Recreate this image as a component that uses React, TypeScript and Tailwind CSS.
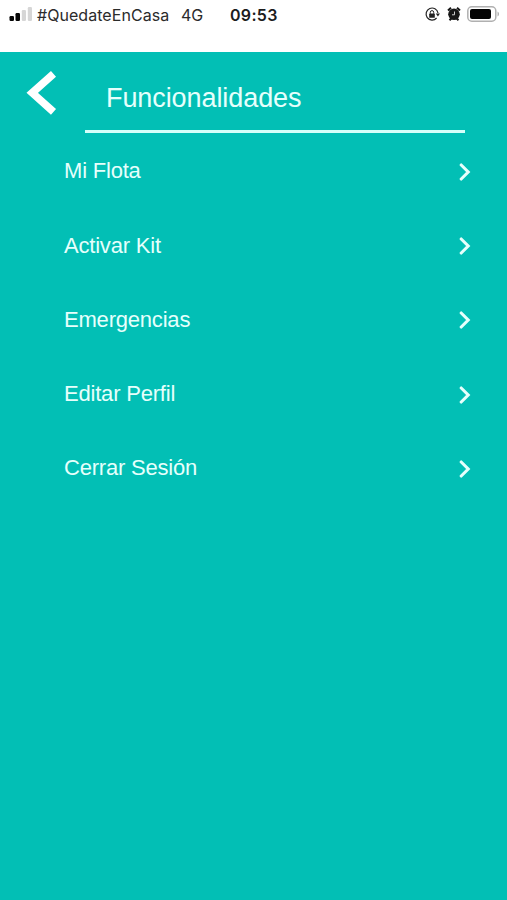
const menuItems = [
  "Mi Flota",
  "Activar Kit",
  "Emergencias",
  "Editar Perfil",
  "Cerrar Sesión",
];

function StatusBar() {
  return (
    <div className="flex h-[52px] items-start bg-white font-[Inter,sans-serif] text-[#2b2b2b]">
      <svg className="mt-1.5 ml-[9px] h-4 w-6 shrink-0" viewBox="0 0 24 16">
        <rect x="0.5" y="10" width="4.5" height="5" rx="1.2" fill="#050505" />
        <rect x="6.5" y="7" width="4.5" height="8" rx="1.2" fill="#050505" />
        <rect x="12.8" y="4" width="4.2" height="11" rx="1.2" fill="#d6d6d6" />
        <rect x="18.8" y="1" width="4.2" height="14" rx="1.2" fill="#d6d6d6" />
      </svg>
      <span className="mt-1 ml-1 w-36 text-base leading-[22px] tracking-[0.05px] whitespace-nowrap">
        #QuedateEnCasa
      </span>
      <span className="mt-1 w-[49px] text-base leading-[22px]">4G</span>
      <span className="mt-1 text-base leading-[22px] font-semibold tracking-[0.3px] text-[#1c1c1c]">
        09:53
      </span>
      <div className="mt-1.5 mr-[7px] ml-auto flex items-center">
        <svg className="h-4 w-4" viewBox="0 0 16 16" fill="none">
          <path
            d="M14 7A6 6 0 1 0 12.6 12"
            stroke="#222"
            strokeWidth="1.2"
          />
          <path d="M11.8 7.4h4.2l-2.1 3.2z" fill="#222" />
          <rect x="5.2" y="7.6" width="5.6" height="4.2" rx="0.6" fill="#222" />
          <path d="M6.3 7.8V6.3a1.7 1.7 0 0 1 3.4 0v1.5" stroke="#222" />
        </svg>
        <svg className="ml-[7px] h-4 w-3.5" viewBox="0 0 14 16" fill="none">
          <circle cx="7" cy="8.3" r="5.8" fill="#161616" />
          <path
            d="M1 4.5 4 1.8M13 4.5l-3-2.7M2.5 14.3l1.8-1.8M11.5 14.3l-1.8-1.8"
            stroke="#161616"
            strokeWidth="2"
          />
          <path d="M7.5 5.5v3.3H5" stroke="#ccc" />
        </svg>
        <svg className="ml-1.5 h-4 w-[33px]" viewBox="0 0 33 16">
          <rect
            x="0.8"
            y="0.8"
            width="28"
            height="14.4"
            rx="4"
            fill="#fff"
            stroke="#b0b0b0"
            strokeWidth="1.5"
          />
          <rect x="3" y="3" width="21" height="10" rx="2" fill="#050505" />
          <path d="M30.5 5.5c2 .8 2 4.2 0 5z" fill="#b0b0b0" />
        </svg>
      </div>
    </div>
  );
}

export default function App() {
  return (
    <main className="flex h-screen flex-col overflow-hidden bg-[#02bfb5] font-['Liberation_Sans',Arial,sans-serif]">
      <StatusBar />

      <header className="flex h-[83px] shrink-0 items-start text-[#e6fffc]">
        <button aria-label="Volver" className="mt-[18px] ml-[26px] shrink-0">
          <svg className="h-[46px] w-8" viewBox="0 0 32 46" fill="none">
            <path d="M27.5 3.8 6.2 22.8l21.3 19" stroke="#fff" strokeWidth="7.6" />
          </svg>
        </button>
        <h1 className="ml-[27px] h-[81px] w-[380px] border-b-[3px] border-[#d5fffa] pt-[30px] pl-[21px] text-[27px] leading-8 tracking-[-0.08px]">
          Funcionalidades
        </h1>
      </header>

      <nav className="flex flex-col pr-9 pl-16">
        {menuItems.map((item) => (
          <a
            key={item}
            href="#"
            className="flex h-[74.2px] items-center justify-between text-[22px] leading-none tracking-[-0.2px] text-[#e6fffc]"
          >
            <span className="pb-[1.5px]">{item}</span>
            <svg className="h-[18px] w-3" viewBox="0 0 12 18" fill="none">
              <path
                d="m2.2 2 7 7-7 7"
                stroke="#e6fffc"
                strokeWidth="3.1"
                strokeLinecap="round"
              />
            </svg>
          </a>
        ))}
      </nav>
    </main>
  );
}
